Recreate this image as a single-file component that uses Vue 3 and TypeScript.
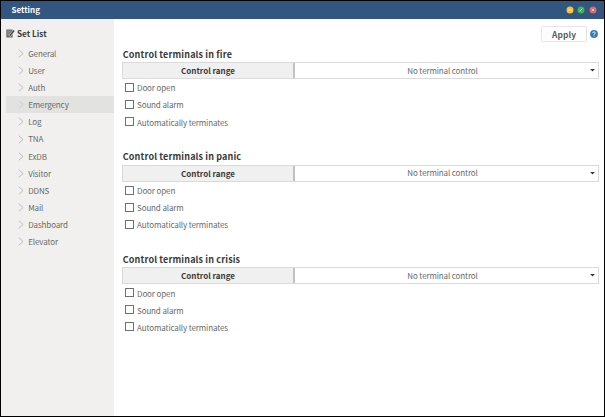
<script setup lang="ts">
import { ref } from 'vue'

interface Section {
  title: string
  options: { label: string; checked: boolean }[]
}

const menu: string[] = [
  'General', 'User', 'Auth', 'Emergency', 'Log', 'TNA',
  'ExDB', 'Visitor', 'DDNS', 'Mail', 'Dashboard', 'Elevator',
]
const active = ref('Emergency')

const makeSection = (title: string): Section => ({
  title,
  options: ['Door open', 'Sound alarm', 'Automatically terminates'].map((label) => ({ label, checked: false })),
})
const sections = ref<Section[]>([
  makeSection('Control terminals in fire'),
  makeSection('Control terminals in panic'),
  makeSection('Control terminals in crisis'),
])
</script>

<template>
  <div class="window">
    <header class="titlebar">
      <span class="title">Setting</span>
      <div class="controls">
        <svg class="dot" viewBox="0 0 8 8"><circle cx="4" cy="4" r="3.5" fill="#f3c536" /><path d="M2 4h4" stroke="#fbe58a" /></svg>
        <svg class="dot" viewBox="0 0 8 8"><circle cx="4" cy="4" r="3.5" fill="#3cb653" /><path d="M2.6 5.4l2.8-2.8" stroke="#b5efbd" /></svg>
        <svg class="dot" viewBox="0 0 8 8"><circle cx="4" cy="4" r="3.5" fill="#de6468" /><path d="M2.7 2.7l2.6 2.6M5.3 2.7l-2.6 2.6" stroke="#f9cccc" /></svg>
      </div>
    </header>
    <div class="body">
      <nav class="sidebar">
        <h2 class="list-title">
          <svg class="edit" viewBox="0 0 9 9">
            <path d="M.3.5h6.4V2L5.2 6.2 6.7 5v3.5H.3z" fill="#6c6c6c" />
            <path d="M1.4 2.2h3.2M1.4 3.9h2.2M1.4 5.6h1.4" stroke="#c4c4c4" stroke-width=".6" />
            <path d="M3.6 7L8.1 1.6" stroke="#f1f0ee" stroke-width="2.4" />
            <path d="M3.8 6.8L8.1 1.6" stroke="#444" stroke-width="1.5" />
          </svg>
          <span>Set List</span>
        </h2>
        <ul class="menu">
          <li v-for="item in menu" :key="item" :class="{ active: item === active }" @click="active = item">
            <svg class="chevron" viewBox="0 0 6 9"><path d="M.8.7l4.3 3.8L.8 8.3" fill="none" stroke="#bdbdbd" stroke-width="1" /></svg>
            <span>{{ item }}</span>
          </li>
        </ul>
      </nav>
      <main class="content">
        <div class="toolbar">
          <button class="apply">Apply</button>
          <svg class="help" viewBox="0 0 8 8">
            <circle cx="4" cy="4" r="3.9" fill="#3279b5" />
            <path d="M2.7 3.1c0-1.6 2.6-1.5 2.6-.1 0 .9-1.3.8-1.3 1.8M4 5.5v.9" fill="none" stroke="#fff" stroke-width=".9" />
          </svg>
        </div>
        <section v-for="section in sections" :key="section.title" class="section">
          <h3>{{ section.title }}</h3>
          <div class="range">
            <div class="range-label">Control range</div>
            <div class="select">
              <span>No terminal control</span>
              <svg class="caret" viewBox="0 0 5 3"><path d="M.2 0h4.6L2.5 2.6z" fill="#333" /></svg>
            </div>
          </div>
          <div v-for="option in section.options" :key="option.label" class="option" @click="option.checked = !option.checked">
            <span class="box" :class="{ checked: option.checked }"></span>
            <span class="option-label">{{ option.label }}</span>
          </div>
        </section>
      </main>
    </div>
  </div>
</template>

<style>
body {
  margin: 0;
}
</style>

<style scoped>
.window {
  box-sizing: border-box;
  width: 605px;
  height: 417px;
  border: 1px solid #000;
  display: flex;
  flex-direction: column;
  background: #fff;
  overflow: hidden;
  color: #6a6a6a;
  font-family: "Noto Sans CJK KR", "Noto Sans", sans-serif;
  font-size: 8px;
  letter-spacing: -0.12px;
  line-height: 12px;
}
.titlebar {
  height: 18px;
  flex: none;
  display: flex;
  align-items: center;
  justify-content: space-between;
  padding: 0 7.5px 0 10.5px;
  background: #335681;
}
.title {
  color: #fff;
  font-weight: 700;
  font-size: 8px;
  letter-spacing: 0;
}
.controls {
  display: flex;
  gap: 3.4px;
}
.dot {
  width: 8px;
  height: 8px;
}
.body {
  flex: 1;
  display: flex;
}
.sidebar {
  flex: none;
  width: 113px;
  box-sizing: border-box;
  padding: 7px 0 0 4.5px;
  background: #f1f0ee;
}
.list-title {
  display: flex;
  align-items: center;
  gap: 2.5px;
  margin: 0 0 5px;
  height: 14px;
  color: #3d3d3d;
  font-size: 8.2px;
  letter-spacing: 0;
  font-weight: 700;
}
.edit {
  width: 9px;
  height: 9px;
}
.menu {
  list-style: none;
  margin: 0;
  padding: 0;
}
.menu li {
  height: 17.1px;
  display: flex;
  align-items: center;
  gap: 4.7px;
  padding-left: 12px;
}
.menu li span {
  padding-top: 0.8px;
}
.menu li.active {
  background: #e2e2e1;
}
.menu li.active .chevron {
  opacity: 0.5;
}
.chevron {
  width: 6px;
  height: 9px;
}
.content {
  flex: 1;
  min-width: 0;
  padding: 7px 5px 0 8px;
}
.toolbar {
  display: flex;
  align-items: center;
  justify-content: flex-end;
  gap: 3px;
  height: 16px;
  margin-bottom: 4px;
  padding-right: 1px;
}
.apply {
  box-sizing: border-box;
  width: 46px;
  height: 16px;
  padding: 0;
  border: 1px solid #e4e4e4;
  border-radius: 2px;
  background: #fff;
  color: #5c5c5c;
  font: 700 8.4px/12px "Noto Sans CJK KR", "Noto Sans", sans-serif;
  letter-spacing: 0.1px;
}
.help {
  width: 8px;
  height: 8px;
}
.section {
  height: 102.6px;
}
h3 {
  box-sizing: border-box;
  margin: 0;
  height: 16px;
  line-height: 16px;
  font-size: 9px;
  letter-spacing: 0.14px;
  font-weight: 700;
  color: #3a3a3a;
  padding: 0.6px 0 0 0.8px;
}
.range {
  box-sizing: border-box;
  height: 17px;
  display: flex;
  border: 1px solid #dadada;
}
.range-label {
  box-sizing: border-box;
  width: 172px;
  border-right: 2px solid #c2c2c2;
  background: #f0f0f0;
  color: #3a3a3a;
  font-weight: 700;
  letter-spacing: 0;
  line-height: 15px;
  text-align: center;
}
.select {
  flex: 1;
  display: flex;
  align-items: center;
  padding-right: 3px;
}
.select span {
  flex: 1;
  text-align: center;
  padding-top: 0.6px;
}
.caret {
  width: 5px;
  height: 3px;
}
.option {
  display: flex;
  align-items: center;
  gap: 3px;
  height: 17.1px;
  padding-left: 3px;
}
.option-label {
  padding-top: 1.6px;
}
.box {
  box-sizing: border-box;
  width: 9px;
  height: 9px;
  border: 1px solid #707070;
  background: #fff;
}
.box.checked {
  background: #777;
}
</style>
